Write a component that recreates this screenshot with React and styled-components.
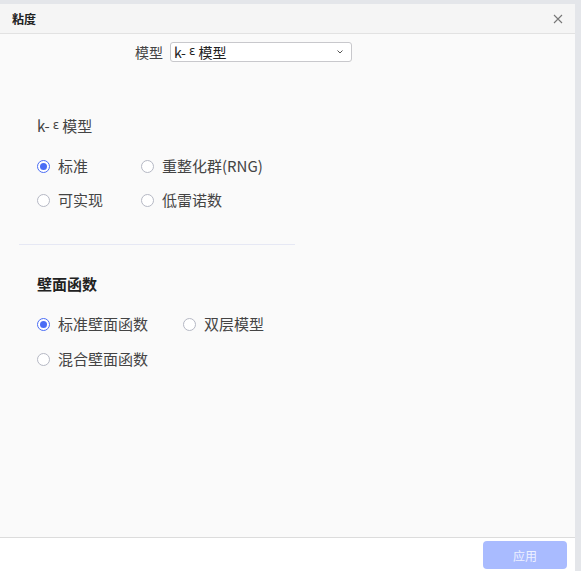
import React from "react";
import styled, { createGlobalStyle } from "styled-components";

const Global = createGlobalStyle`
  html, body { margin: 0; padding: 0; background: #e4e6ea; }
  body { font-family: "Noto Sans CJK SC", "Noto Sans", sans-serif; color: #333; }
  #root { height: 571px; }
`;

const Page = styled.div`
  height: 571px;
  padding: 4px 6px 0 0;
  box-sizing: border-box;
  display: flex;
`;

const Panel = styled.div`
  flex: 1;
  display: flex;
  flex-direction: column;
  background: #fafafa;
`;

const Header = styled.div`
  height: 29px;
  background: #f5f5f5;
  border-bottom: 1px solid #e2e2e2;
  display: flex;
  align-items: center;
  justify-content: space-between;
  padding: 0 10px 0 12px;
`;

const Title = styled.div`
  font-size: 12px;
  font-weight: 700;
  color: #222;
`;

const Close = styled.button`
  border: none;
  background: none;
  padding: 0;
  width: 14px;
  height: 14px;
  display: flex;
  align-items: center;
  justify-content: center;
  cursor: pointer;
`;

const Body = styled.div`
  flex: 1;
  padding: 8px 0 0 0;
`;

const SelectRow = styled.div`
  display: flex;
  align-items: center;
  gap: 7px;
  padding-left: 135px;
  font-size: 14px;
  color: #444;
`;

const Select = styled.div`
  width: 182px;
  height: 20px;
  box-sizing: border-box;
  border: 1px solid #c8c8cc;
  border-radius: 3px;
  background: #fff;
  display: flex;
  align-items: center;
  justify-content: space-between;
  padding: 0 7px 0 3px;
  font-size: 14px;
  color: #222;
`;

const Eps = styled.span`
  font-size: 12px;
  vertical-align: 3px;
  margin: 0 3px 0 3px;
  font-family: "DejaVu Sans", sans-serif;
`;

const Section = styled.div`
  padding: ${p => p.$top}px 0 0 37px;
`;

const SectionTitle = styled.div`
  font-size: 15px;
  font-weight: ${p => (p.$bold ? 700 : 400)};
  color: ${p => (p.$bold ? "#222" : "#444")};
  line-height: 20px;
`;

const Options = styled.div`
  display: grid;
  grid-template-columns: ${p => p.$col}px auto;
  row-gap: ${p => p.$gap}px;
  margin-top: ${p => p.$mt}px;
  justify-content: start;
`;

const Option = styled.label`
  display: flex;
  align-items: center;
  gap: 8px;
  font-size: 15px;
  color: #444;
  line-height: 20px;
`;

const Radio = styled.span`
  width: 13px;
  height: 13px;
  box-sizing: border-box;
  border-radius: 50%;
  border: 1px solid ${p => (p.$on ? "#4a6df5" : "#b5b8c4")};
  background: #fff;
  display: flex;
  align-items: center;
  justify-content: center;
  &::after {
    content: "";
    width: 7px;
    height: 7px;
    border-radius: 50%;
    background: ${p => (p.$on ? "#4a6df5" : "transparent")};
  }
`;

const Divider = styled.div`
  width: 276px;
  height: 1px;
  background: #e6e8f4;
  margin: 34px 0 0 19px;
`;

const Footer = styled.div`
  height: 34px;
  box-sizing: border-box;
  border-top: 1px solid #dcdcdc;
  background: #fff;
  display: flex;
  justify-content: flex-end;
  align-items: flex-start;
  padding: 3px 8px 0 0;
`;

const Apply = styled.button`
  width: 84px;
  height: 28px;
  border: none;
  border-radius: 4px;
  background: #a9bbff;
  color: #eef1ff;
  font-size: 12px;
  font-family: "Noto Sans CJK SC", sans-serif;
`;

const Opt = ({ on, children }) => (
  <Option>
    <Radio $on={on} />
    {children}
  </Option>
);

export default function App() {
  return (
    <>
      <Global />
      <Page>
        <Panel>
          <Header>
            <Title>粘度</Title>
            <Close aria-label="close">
              <svg width="10" height="10" viewBox="0 0 10 10">
                <path d="M1 1L9 9M9 1L1 9" stroke="#777" strokeWidth="1.1" />
              </svg>
            </Close>
          </Header>
          <Body>
            <SelectRow>
              <span>模型</span>
              <Select>
                <span>k-<Eps>ε</Eps>模型</span>
                <svg width="8" height="6" viewBox="0 0 8 6">
                  <path d="M1.5 1.5L4 4L6.5 1.5" stroke="#555" strokeWidth="1" fill="none" />
                </svg>
              </Select>
            </SelectRow>
            <Section $top={53}>
              <SectionTitle>k-<Eps>ε</Eps>模型</SectionTitle>
              <Options $col={104} $mt={20} $gap={14}>
                <Opt on>标准</Opt>
                <Opt>重整化群(RNG)</Opt>
                <Opt>可实现</Opt>
                <Opt>低雷诺数</Opt>
              </Options>
            </Section>
            <Divider />
            <Section $top={29}>
              <SectionTitle $bold>壁面函数</SectionTitle>
              <Options $col={146} $mt={20} $gap={15}>
                <Opt on>标准壁面函数</Opt>
                <Opt>双层模型</Opt>
                <Opt>混合壁面函数</Opt>
              </Options>
            </Section>
          </Body>
          <Footer>
            <Apply>应用</Apply>
          </Footer>
        </Panel>
      </Page>
    </>
  );
}
